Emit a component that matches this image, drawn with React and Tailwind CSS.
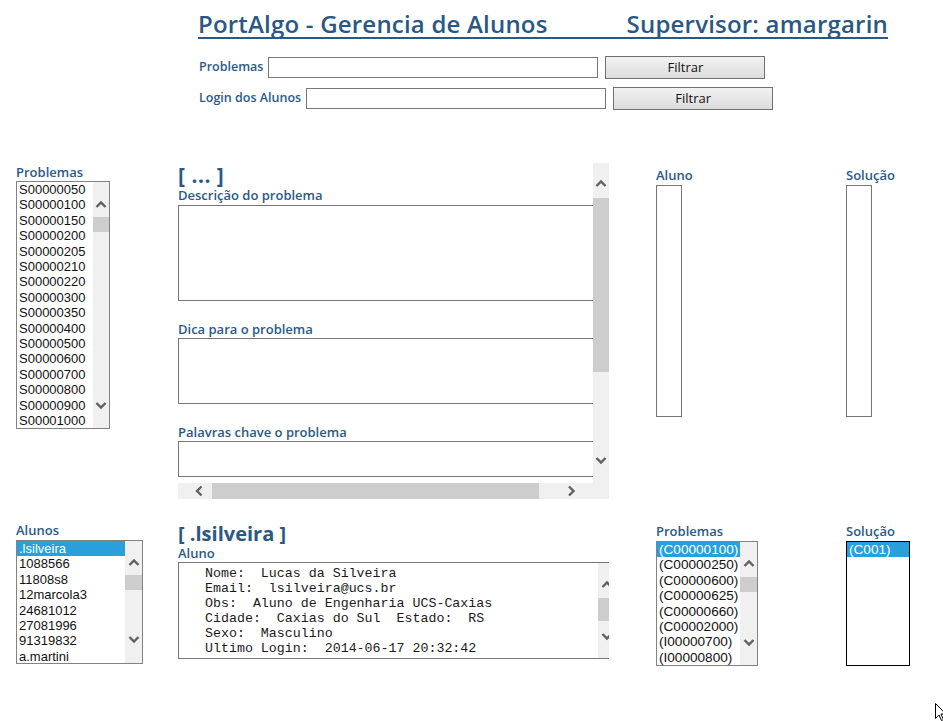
import React from 'react'

const Chevron = ({ dir }) => {
  const d = {
    up: 'M1.5 7 L6 2.5 L10.5 7',
    down: 'M1.5 2 L6 6.5 L10.5 2',
    left: 'M6.5 1.5 L2 6 L6.5 10.5',
    right: 'M2 1.5 L6.5 6 L2 10.5',
  }[dir]
  const vertical = dir === 'up' || dir === 'down'
  return (
    <svg width={vertical ? 12 : 9} height={vertical ? 9 : 12} viewBox={vertical ? '0 0 12 9' : '0 0 9 12'} className="block shrink-0">
      <path d={d} fill="none" stroke="#606060" strokeWidth="2.4" />
    </svg>
  )
}

// fake windows-ish vertical scrollbar
function VScroll({ width, top, gap, thumb, bottom }) {
  return (
    <div className={`${width} shrink-0 bg-[#f0f0f0] flex flex-col items-center`}>
      <div className={top} />
      <Chevron dir="up" />
      <div className={gap} />
      <div className={`${thumb} w-full bg-[#cdcdcd]`} />
      <div className="flex-1" />
      <Chevron dir="down" />
      <div className={bottom} />
    </div>
  )
}

function ListBox({ items, selected, box, scroll, text = 'text-[13px]' }) {
  return (
    <div className={`${box} border border-[#828282] flex bg-white`}>
      <div className={`flex-1 overflow-hidden font-['Liberation_Sans',Arial,sans-serif] ${text} leading-[15.4px] text-[#111]`}>
        {items.map((it, i) => (
          <div
            key={it}
            className={`pl-[2px] whitespace-nowrap ${i === selected ? 'bg-[#29a0db] text-white' : ''}`}
          >
            {it}
          </div>
        ))}
      </div>
      {scroll}
    </div>
  )
}

const Label = ({ children, className = '' }) => (
  <div className={`text-[13px] leading-[14px] font-semibold text-[#2a5a88] ${className}`}>{children}</div>
)

const problemas = [
  'S00000050', 'S00000100', 'S00000150', 'S00000200', 'S00000205', 'S00000210',
  'S00000220', 'S00000300', 'S00000350', 'S00000400', 'S00000500', 'S00000600',
  'S00000700', 'S00000800', 'S00000900', 'S00001000',
]
const alunos = ['.lsilveira', '1088566', '11808s8', '12marcola3', '24681012', '27081996', '91319832', 'a.martini']
const probAluno = ['(C00000100)', '(C00000250)', '(C00000600)', '(C00000625)', '(C00000660)', '(C00002000)', '(I00000700)', '(I00000800)']

const alunoInfo = [
  'Nome:  Lucas da Silveira',
  'Email:  lsilveira@ucs.br',
  'Obs:  Aluno de Engenharia UCS-Caxias',
  'Cidade:  Caxias do Sul  Estado:  RS',
  'Sexo:  Masculino',
  'Ultimo Login:  2014-06-17 20:32:42',
]

function FilterRow({ label, inputW, className = '' }) {
  return (
    <div className={`flex items-center h-[23px] ${className}`}>
      <span className="text-[12.5px] font-semibold text-[#2a5a88] mr-[5px] whitespace-nowrap">{label}</span>
      <input className={`${inputW} h-[21px] border border-[#767676] bg-white outline-none`} />
      <button className="ml-[7px] w-[160px] h-[23px] border border-[#707070] bg-gradient-to-b from-[#f2f2f2] to-[#dcdcdc] text-[13px] text-[#111] font-['Open_Sans',sans-serif]">
        Filtrar
      </button>
    </div>
  )
}

export default function App() {
  return (
    <div className="relative w-[943px] h-[721px] overflow-hidden bg-white font-['Open_Sans',sans-serif]">
      {/* header */}
      <div className="ml-[198px] w-[690px] pt-[10px]">
        <div className="flex justify-between border-b-2 border-[#2b5883] text-[24px] leading-[27px] font-semibold text-[#2b5883] tracking-[0.2px]">
          <span>PortAlgo - Gerencia de Alunos</span>
          <span>Supervisor: amargarin</span>
        </div>
        <FilterRow label="Problemas" inputW="w-[330px]" className="mt-[17px] ml-[1px]" />
        <FilterRow label="Login dos Alunos" inputW="w-[300px]" className="mt-[8px] ml-[1px]" />
      </div>

      {/* top section */}
      <div className="flex pl-4 mt-[53px]">
        <div className="w-[162px] pt-[2px]">
          <Label className="mb-[2px]">Problemas</Label>
          <ListBox
            items={problemas}
            box="w-[94px] h-[248px]"
            scroll={<VScroll width="w-[16px]" top="h-[18px]" gap="h-[8px]" thumb="h-[15px]" bottom="h-[18px]" />}
          />
        </div>

        <div className="w-[478px]">
          <div className="w-[431px] h-[336px] flex flex-col">
            <div className="flex h-[320px]">
              <div className="w-[415px] overflow-x-clip">
                <div className="w-[460px]">
                  <div className="text-[21px] leading-[24px] font-bold text-[#2b5883] tracking-[0.5px]">[ ... ]</div>
                  <Label className="leading-[16px]">Descrição do problema</Label>
                  <div className="mt-[2px] h-[96px] border border-[#767676]" />
                  <Label className="mt-[20px] leading-[16px]">Dica para o problema</Label>
                  <div className="mt-[1px] h-[66px] border border-[#767676]" />
                  <Label className="mt-[20px] leading-[16px]">Palavras chave o problema</Label>
                  <div className="mt-[1px] h-[36px] border border-[#767676]" />
                </div>
              </div>
              <VScroll width="w-[16px]" top="h-[16px]" gap="h-[10px]" thumb="h-[174px]" bottom="h-[18px]" />
            </div>
            <div className="h-[16px] bg-[#f0f0f0] flex items-center">
              <div className="w-[17px]" />
              <Chevron dir="left" />
              <div className="w-[8px]" />
              <div className="w-[327px] h-full bg-[#cdcdcd]" />
              <div className="w-[28px]" />
              <Chevron dir="right" />
            </div>
          </div>
        </div>

        <div className="w-[190px] pt-[5px]">
          <Label className="mb-[3px]">Aluno</Label>
          <div className="w-[26px] h-[232px] border border-[#767676]" />
        </div>

        <div className="pt-[5px]">
          <Label className="mb-[3px]">Solução</Label>
          <div className="w-[26px] h-[232px] border border-[#767676]" />
        </div>
      </div>

      {/* bottom section */}
      <div className="flex pl-4 mt-[24px]">
        <div className="w-[162px]">
          <Label className="mb-[3px]">Alunos</Label>
          <ListBox
            items={alunos}
            selected={0}
            box="w-[127px] h-[124px]"
            scroll={<VScroll width="w-[17px]" top="h-[17px]" gap="h-[8px]" thumb="h-[15px]" bottom="h-[19px]" />}
          />
        </div>

        <div className="w-[478px]">
          <div className="text-[20px] leading-[22px] font-bold text-[#2b5883]">[ .lsilveira ]</div>
          <Label className="mt-[1px]">Aluno</Label>
          <div className="mt-[2px] w-[431px] overflow-hidden">
            <div className="w-[438px] h-[97px] border border-[#767676] flex">
              <pre className="flex-1 pl-[26px] pt-[3px] font-['Liberation_Mono','Courier_New',monospace] text-[13.3px] leading-[15px] text-[#1a1a1a]">
                {alunoInfo.join('\n')}
              </pre>
              <VScroll width="w-[17px]" top="h-[17px]" gap="h-[9px]" thumb="h-[23px]" bottom="h-[17px]" />
            </div>
          </div>
        </div>

        <div className="w-[190px] pt-[1px]">
          <Label className="mb-[3px]">Problemas</Label>
          <ListBox
            items={probAluno}
            selected={0}
            text="text-[13.6px]"
            box="w-[102px] h-[125px]"
            scroll={<VScroll width="w-[17px]" top="h-[17px]" gap="h-[9px]" thumb="h-[15px]" bottom="h-[18px]" />}
          />
        </div>

        <div className="pt-[1px]">
          <Label className="mb-[3px]">Solução</Label>
          <div className="w-[64px] h-[125px] border border-black bg-white font-['Liberation_Sans',Arial,sans-serif] text-[13.6px] leading-[15.4px]">
            <div className="pl-[2px] bg-[#29a0db] text-white">(C001)</div>
          </div>
        </div>
      </div>

      {/* mouse pointer */}
      <svg className="absolute left-[935px] top-[703px]" width="12" height="19" viewBox="0 0 12 19">
        <path d="M0.5 0.5 L0.5 15.5 L4 12 L6.5 17.5 L8.5 16.5 L6 11 L11 11 Z" fill="white" stroke="black" strokeWidth="1" />
      </svg>
    </div>
  )
}
